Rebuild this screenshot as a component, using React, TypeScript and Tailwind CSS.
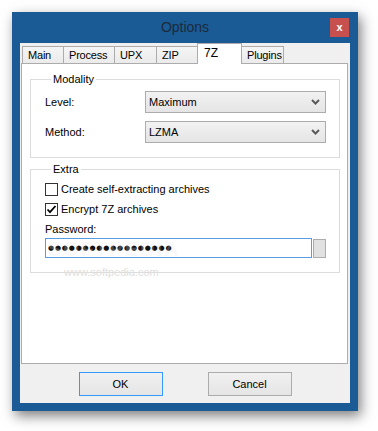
import React from "react";

const tabs = [
	{ label: "Main", w: "w-[42px]" },
	{ label: "Process", w: "w-[52px]" },
	{ label: "UPX", w: "w-[43px]" },
	{ label: "ZIP", w: "w-[42px]" },
	{ label: "7Z", w: "w-[45px]", active: true },
	{ label: "Plugins", w: "w-[43px]" },
];

function Chevron() {
	return (
		<svg width="9" height="6" viewBox="0 0 9 6" className="text-[#5a5a5a]">
			<path d="M1 1 L4.5 4.5 L8 1" fill="none" stroke="currentColor" strokeWidth="2" />
		</svg>
	);
}

function Select({ value }: { value: string }) {
	return (
		<div className="flex h-[22px] w-[181px] items-center justify-between border border-[#acacac] bg-linear-to-b from-[#f2f2f2] to-[#e5e5e5] pl-[3px] pr-[5px]">
			<span>{value}</span>
			<Chevron />
		</div>
	);
}

function Checkbox({ checked, label }: { checked?: boolean; label: string }) {
	return (
		<label className="flex h-[13px] items-center gap-[3px]">
			<span className="flex h-[13px] w-[13px] items-center justify-center border border-[#333] bg-white">
				{checked && (
					<svg width="11" height="11" viewBox="0 0 11 11">
						<path d="M1.5 5.5 L4 8.2 L9.5 2" fill="none" stroke="#000" strokeWidth="1.8" />
					</svg>
				)}
			</span>
			<span>{label}</span>
		</label>
	);
}

function GroupBox({ title, className, children }: { title: string; className?: string; children: React.ReactNode }) {
	return (
		<fieldset className={`border border-[#dcdcdc] pl-[14px] pb-[14px] ${className ?? ""}`}>
			<legend className="ml-[6px] px-[2px] leading-[13px]">{title}</legend>
			{children}
		</fieldset>
	);
}

export default function App() {
	return (
		<div className="h-[431px] w-[378px] bg-white pl-[12px] pt-[12px] font-['Liberation_Sans',Arial,sans-serif] text-[11px] text-black">
			<div className="flex h-[399px] w-[346px] flex-col bg-[#1a5b96] shadow-[3px_5px_12px_rgba(0,0,0,0.5)]">
				{/* title bar */}
				<div className="grid h-[31px] grid-cols-[1fr_auto_1fr] items-center">
					<div />
					<span className="text-[14px] text-[#1c2a3c]">Options</span>
					<div className="flex h-full items-start justify-end pr-[9px] pt-[6px]">
						<button className="flex h-[19px] w-[19px] items-center justify-center bg-[#c7504f] text-[11px] font-bold leading-none text-white">
							x
						</button>
					</div>
				</div>

				{/* client */}
				<div className="mx-[8px] flex h-[360px] flex-col bg-[#f0f0f0]">
					<div className="relative z-10 flex h-[20px] items-start pl-[2px]">
						{tabs.map((t, i) =>
							t.active ? (
								<div
									key={t.label}
									className={`${t.w} -ml-px flex h-[21px] items-center border border-b-0 border-[#acacac] bg-white pb-[2px] pl-[6px] text-[12px]`}
								>
									{t.label}
								</div>
							) : (
								<div
									key={t.label}
									className={`${t.w} ${i > 0 ? "-ml-px" : ""} mt-[3px] flex h-[17px] items-center border border-b-0 border-[#acacac] bg-linear-to-b from-[#f5f5f5] to-[#ebebeb] pl-[5px] tracking-[-0.2px]`}
								>
									{t.label}
								</div>
							),
						)}
					</div>

					<div className="relative ml-[1px] h-[301px] w-[327px] border border-[#acacac] bg-white pl-[8px] pr-[7px] pt-[9px]">
						<GroupBox title="Modality">
							<div className="flex flex-col gap-[8px] pt-[5px]">
								<div className="flex items-center">
									<span className="w-[100px]">Level:</span>
									<Select value="Maximum" />
								</div>
								<div className="flex items-center">
									<span className="w-[100px]">Method:</span>
									<Select value="LZMA" />
								</div>
							</div>
						</GroupBox>

						<GroupBox title="Extra" className="mt-[5px]">
							<div className="flex flex-col pt-[7px]">
								<Checkbox label="Create self-extracting archives" />
								<div className="mt-[7px]">
									<Checkbox checked label="Encrypt 7Z archives" />
								</div>
								<span className="mt-[7px] leading-[13px]">Password:</span>
								<div className="mt-[2px] flex items-center">
									<div className="flex h-[20px] w-[267px] items-center border border-[#569de5] bg-white pl-[2px]">
										<span className="font-['DejaVu_Sans',sans-serif] text-[7px] leading-none tracking-[0.8px] text-[#111]">
											●●●●●●●●●●●●●●●●●●
										</span>
									</div>
									<div className="ml-[1px] h-[19px] w-[13px] border border-[#adadad] bg-[#e1e1e1]" />
								</div>
							</div>
						</GroupBox>

						{/* watermark */}
						<span className="pointer-events-none absolute left-[26px] top-[170px] text-[20px] font-bold tracking-[2px] text-[#e8e8e8] opacity-25">
							SOFTPEDIA
						</span>
						<span className="pointer-events-none absolute left-[42px] top-[200px] text-[11px] text-[#e0e0e0]">
							www.softpedia.com
						</span>
					</div>

					<div className="flex justify-center gap-[45px] pt-[8px]">
						<button className="h-[24px] w-[84px] border border-[#3399ff] bg-linear-to-b from-[#f0f0f0] to-[#e5e5e5]">
							OK
						</button>
						<button className="h-[24px] w-[84px] border border-[#acacac] bg-linear-to-b from-[#f0f0f0] to-[#e5e5e5]">
							Cancel
						</button>
					</div>
				</div>
			</div>
		</div>
	);
}
